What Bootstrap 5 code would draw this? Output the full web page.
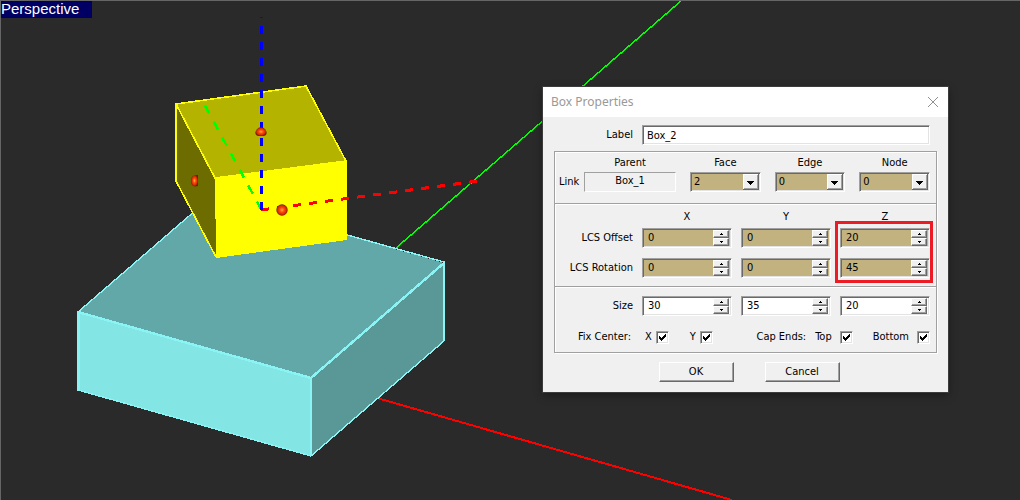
<!DOCTYPE html>
<html lang="en">
<head>
<meta charset="utf-8">
<meta name="viewport" content="width=device-width, initial-scale=1">
<title>Box Properties</title>
<link href="https://cdn.jsdelivr.net/npm/bootstrap@5.3.0/dist/css/bootstrap.min.css" rel="stylesheet">
<style>
:root { --face: #f0f0f0; --tan: #c2b280; --shade: #a0a0a0; --dark: #696969; --light: #e3e3e3; }
body { background: #2a2a2a; }
.viewport { border-top: 1px solid #666; border-left: 1px solid #666; height: 100vh; }
.scene { width: 100%; height: 100%; }
.view-name { top: 0; left: 0; width: 91px; height: 17px; background: #000064; color: #fff; font: 15px/16px "Liberation Sans", Arial, sans-serif; }

/* dialog window floating over the 3D canvas */
.prop-window { top: 86px; left: 542px; width: 405px; height: 305px; background: var(--face); color: #000; font: 11px/14px "DejaVu Sans Condensed", "DejaVu Sans", sans-serif; box-shadow: 0 0 0 1px #3c3c3c, 0 3px 9px rgba(0,0,0,.4); }
.title-strip { height: 30px; padding: 0 9px 0 8px; background: #fff; color: #999; font: 12px/16px "Noto Sans", sans-serif; }
.title-strip h1 { font: inherit; }
.close-x { width: 12px; height: 12px; }
.win-body { padding: 8px 11px 0; }
.label-row { grid-template-columns: 79px 1fr; column-gap: 9px; padding-right: 7px; }

.sunken { border: 1px solid; border-color: var(--shade) #fff #fff var(--shade); box-shadow: inset 1px 1px var(--dark), inset -1px -1px var(--light); border-radius: 0; height: 20px; background-color: #fff; color: #000; }
.sunken.tan { background-color: var(--tan); }
.field { padding: 0 4px; font: inherit; outline-offset: 0; }
.raised { border: 1px solid; border-color: #fff var(--dark) var(--dark) #fff; box-shadow: inset -1px -1px var(--shade); background: var(--face); color: #000; border-radius: 0; padding: 0; }

.frame { margin-top: 6px; border: 1px solid var(--shade); box-shadow: 1px 1px #fff, inset 1px 1px #fff; }
.part + .part { border-top: 1px solid var(--shade); box-shadow: inset 0 1px #fff; }
.part { padding: 0 6px 0 4px; }
.link-part { height: 51px; padding-top: 4px; column-gap: 14px; }
.parent-grid { grid-template-columns: 25px 92px; row-gap: 2px; }
.parent-box { height: 20px; border: 1px solid; border-color: var(--shade) #fff #fff var(--shade); line-height: 16px; }
.pick { row-gap: 2px; }
.picks { column-gap: 14px; }
.drop { appearance: none; padding: 0 20px 0 3px; font: inherit; background-repeat: no-repeat; background-position: right 1px top 1px;
  background-image: url("data:image/svg+xml,%3Csvg xmlns='http://www.w3.org/2000/svg' width='16' height='16' shape-rendering='crispEdges'%3E%3Cpath fill='%23696969' d='M0 0h16v16H0z'/%3E%3Cpath fill='%23fff' d='M0 0h15v15H0z'/%3E%3Cpath fill='%23a0a0a0' d='M1 1h14v14H1z'/%3E%3Cpath fill='%23f0f0f0' d='M1 1h13v13H1z'/%3E%3Cpath d='M4 7h7v1h-1v1h-1v1h-1v1h-1v-1h-1v-1h-1v-1h-1z'/%3E%3C/svg%3E"); }

.value-grid { grid-template-columns: 1fr 90px 90px 90px; column-gap: 9px; align-items: center; }
.lcs-part { height: 83px; padding-top: 6px; }
.lcs-part .value-grid { row-gap: 10px; }
.heads { margin-bottom: 4px; }
.spin { padding: 1px 2px 1px 1px; }
.spin input { width: 0; min-width: 0; border: 0; background: transparent; padding: 0 0 0 4px; font: inherit; color: #000; }
.spin-btns { width: 16px; flex: none; }
.spin-btns button { height: 8px; line-height: 0; display: flex; align-items: center; justify-content: center; }
.spin-btns svg { width: 3px; height: 2px; }
.callout { top: 134px; left: 292px; width: 98px; height: 62px; border: 3px solid #ed1c24; pointer-events: none; }
.size-part { height: 66px; padding-top: 9px; }
.checks { margin-top: 14px; height: 14px; }
.checks label { column-gap: 4px; }
.fix-group { width: 72px; }
.tick { appearance: none; margin: 0; width: 13px; height: 13px; border: 1px solid; border-color: var(--shade) #fff #fff var(--shade); box-shadow: inset 1px 1px var(--dark), inset -1px -1px var(--light); background: #fff; }
.tick:checked { background-image: url("data:image/svg+xml,%3Csvg xmlns='http://www.w3.org/2000/svg' width='11' height='11' shape-rendering='crispEdges'%3E%3Cpath d='M2 4h1v1h1v1h1v-1h1v-1h1v-1h1v-1h1v3h-1v1h-1v1h-1v1h-1v1h-1v-1h-1v-1h-1z'/%3E%3C/svg%3E"); }
.x-tick { margin-left: 14px; } .y-tick { margin-left: 21px; }
.cap-group { column-gap: 9px; }
.checks .cap-group label { column-gap: 8px; }
.bottom-tick { margin-left: 11px; }
.actions { margin-top: 9px; padding-left: 7px; column-gap: 31px; }
.push { width: 75px; height: 20px; font: inherit; }
</style>
</head>
<body>
<main class="viewport position-relative overflow-hidden">
  <svg class="scene d-block" viewBox="1 1 1019 499" preserveAspectRatio="xMinYMin slice" role="img" aria-label="Two linked boxes in perspective">
    <defs>
      <radialGradient id="ball"><stop offset="0" stop-color="#ffb028"/><stop offset=".4" stop-color="#ff4a10"/><stop offset=".75" stop-color="#d82c00"/><stop offset="1" stop-color="#702000"/></radialGradient>
    </defs>
    <g shape-rendering="crispEdges" fill="none">
      <path d="M396 248L681 1" stroke="#0f0" stroke-width="1.5"/>
      <path d="M377 398L732 500" stroke="#f00" stroke-width="2"/>
      <path d="M78 312L211 197L444 263L311 378Z" fill="#62a8a9"/>
      <path d="M78 312L311 378V456L78 390Z" fill="#84e6e4"/>
      <path d="M311 378L444 263V341L311 456Z" fill="#5a9898"/>
      <path d="M78 312L211 197L444 262V341L311 456L78 390Z" stroke="#8af4f4" stroke-width="1.4"/>
      <path d="M78 312L311 378L444 263M311 378V456M79 312V390" stroke="#8af4f4" stroke-width="2.4"/>
      <path d="M176 104L306 86L346 161L215 178Z" fill="#b3b300"/>
      <path d="M176 104L215 178L216 257L176 181Z" fill="#6c6c00"/>
      <path d="M215 178L347 161V240L216 258Z" fill="#ff0"/>
      <path d="M216 257L176 181V104L306 86L346 161L215 178L176 104" stroke="#ff0" stroke-width="1.6"/>
      <path d="M205 105.500L261 209" stroke="#0f0" stroke-width="2.600" stroke-dasharray="9.100 9.100"/>
      <path d="M261 210L478 181" stroke="#f00" stroke-width="3" stroke-dasharray="8.070 8.070"/>
      <path d="M261.500 210V17" stroke="#00f" stroke-width="3" stroke-dasharray="8"/>
    </g>
    <path d="M255.500 134a5.600 5.600 0 1 1 11 0q-1 2-3 2h-5q-2 0-3-2z" fill="url(#ball)"/>
    <path d="M198 175a6.500 6 0 0 0 0 11.500z" fill="#c83008"/>
    <path d="M198 175q-7-1-7 6t7 5z" fill="url(#ball)"/>
    <circle cx="282" cy="210" r="5.700" fill="url(#ball)"/>
  </svg>
  <div class="view-name position-absolute">Perspective</div>

  <section class="prop-window position-absolute" aria-labelledby="dlg-title">
    <header class="title-strip d-flex align-items-center justify-content-between">
      <h1 id="dlg-title" class="m-0">Box Properties</h1>
      <button type="button" class="border-0 bg-transparent p-0 d-flex" aria-label="Close"><svg class="close-x" viewBox="0 0 12 12"><path d="M1 1L11 11M11 1L1 11" stroke="#909090" fill="none"/></svg></button>
    </header>
    <form class="win-body">
      <div class="label-row d-grid align-items-center">
        <label for="lbl" class="text-end">Label</label>
        <input id="lbl" class="sunken field w-100" type="text" value="Box_2">
      </div>
      <div class="frame">
        <div class="part link-part d-flex">
          <div class="parent-grid d-grid align-content-start align-items-center">
            <span></span><span id="parent" class="text-center">Parent</span>
            <span>Link</span><output class="parent-box text-center" aria-labelledby="parent">Box_1</output>
          </div>
          <div class="picks d-flex flex-grow-1">
            <div class="pick d-grid flex-fill align-content-start"><label for="face" class="text-center">Face</label><select id="face" class="drop sunken tan w-100"><option>2</option></select></div>
            <div class="pick d-grid flex-fill align-content-start"><label for="edge" class="text-center">Edge</label><select id="edge" class="drop sunken tan w-100"><option>0</option></select></div>
            <div class="pick d-grid flex-fill align-content-start"><label for="node" class="text-center">Node</label><select id="node" class="drop sunken tan w-100"><option>0</option></select></div>
          </div>
        </div>
        <div class="part lcs-part">
          <div class="value-grid heads d-grid text-center"><span></span><span>X</span><span>Y</span><span>Z</span></div>
          <div class="value-grid d-grid">
            <label for="ox" class="text-end">LCS Offset</label>
            <div class="spin sunken tan d-flex"><input id="ox" class="flex-fill" type="text" inputmode="numeric" value="0"><span class="spin-btns d-flex flex-column"><button type="button" class="raised" aria-label="Increase"><svg viewBox="0 0 3 2"><path d="M0 2h3v-1h-1v-1h-1v1h-1z"/></svg></button><button type="button" class="raised" aria-label="Decrease"><svg viewBox="0 0 3 2"><path d="M0 0h3v1h-1v1h-1v-1h-1z"/></svg></button></span></div>
            <div class="spin sunken tan d-flex"><input aria-label="LCS Offset Y" class="flex-fill" type="text" inputmode="numeric" value="0"><span class="spin-btns d-flex flex-column"><button type="button" class="raised" aria-label="Increase"><svg viewBox="0 0 3 2"><path d="M0 2h3v-1h-1v-1h-1v1h-1z"/></svg></button><button type="button" class="raised" aria-label="Decrease"><svg viewBox="0 0 3 2"><path d="M0 0h3v1h-1v1h-1v-1h-1z"/></svg></button></span></div>
            <div class="spin sunken tan d-flex"><input aria-label="LCS Offset Z" class="flex-fill" type="text" inputmode="numeric" value="20"><span class="spin-btns d-flex flex-column"><button type="button" class="raised" aria-label="Increase"><svg viewBox="0 0 3 2"><path d="M0 2h3v-1h-1v-1h-1v1h-1z"/></svg></button><button type="button" class="raised" aria-label="Decrease"><svg viewBox="0 0 3 2"><path d="M0 0h3v1h-1v1h-1v-1h-1z"/></svg></button></span></div>
            <label for="rx" class="text-end">LCS Rotation</label>
            <div class="spin sunken tan d-flex"><input id="rx" class="flex-fill" type="text" inputmode="numeric" value="0"><span class="spin-btns d-flex flex-column"><button type="button" class="raised" aria-label="Increase"><svg viewBox="0 0 3 2"><path d="M0 2h3v-1h-1v-1h-1v1h-1z"/></svg></button><button type="button" class="raised" aria-label="Decrease"><svg viewBox="0 0 3 2"><path d="M0 0h3v1h-1v1h-1v-1h-1z"/></svg></button></span></div>
            <div class="spin sunken tan d-flex"><input aria-label="LCS Rotation Y" class="flex-fill" type="text" inputmode="numeric" value="0"><span class="spin-btns d-flex flex-column"><button type="button" class="raised" aria-label="Increase"><svg viewBox="0 0 3 2"><path d="M0 2h3v-1h-1v-1h-1v1h-1z"/></svg></button><button type="button" class="raised" aria-label="Decrease"><svg viewBox="0 0 3 2"><path d="M0 0h3v1h-1v1h-1v-1h-1z"/></svg></button></span></div>
            <div class="spin sunken tan d-flex"><input aria-label="LCS Rotation Z" class="flex-fill" type="text" inputmode="numeric" value="45"><span class="spin-btns d-flex flex-column"><button type="button" class="raised" aria-label="Increase"><svg viewBox="0 0 3 2"><path d="M0 2h3v-1h-1v-1h-1v1h-1z"/></svg></button><button type="button" class="raised" aria-label="Decrease"><svg viewBox="0 0 3 2"><path d="M0 0h3v1h-1v1h-1v-1h-1z"/></svg></button></span></div>
          </div>
        </div>
        <div class="part size-part">
          <div class="value-grid d-grid">
            <label for="sx" class="text-end">Size</label>
            <div class="spin sunken d-flex"><input id="sx" class="flex-fill" type="text" inputmode="numeric" value="30"><span class="spin-btns d-flex flex-column"><button type="button" class="raised" aria-label="Increase"><svg viewBox="0 0 3 2"><path d="M0 2h3v-1h-1v-1h-1v1h-1z"/></svg></button><button type="button" class="raised" aria-label="Decrease"><svg viewBox="0 0 3 2"><path d="M0 0h3v1h-1v1h-1v-1h-1z"/></svg></button></span></div>
            <div class="spin sunken d-flex"><input aria-label="Size Y" class="flex-fill" type="text" inputmode="numeric" value="35"><span class="spin-btns d-flex flex-column"><button type="button" class="raised" aria-label="Increase"><svg viewBox="0 0 3 2"><path d="M0 2h3v-1h-1v-1h-1v1h-1z"/></svg></button><button type="button" class="raised" aria-label="Decrease"><svg viewBox="0 0 3 2"><path d="M0 0h3v1h-1v1h-1v-1h-1z"/></svg></button></span></div>
            <div class="spin sunken d-flex"><input aria-label="Size Z" class="flex-fill" type="text" inputmode="numeric" value="20"><span class="spin-btns d-flex flex-column"><button type="button" class="raised" aria-label="Increase"><svg viewBox="0 0 3 2"><path d="M0 2h3v-1h-1v-1h-1v1h-1z"/></svg></button><button type="button" class="raised" aria-label="Decrease"><svg viewBox="0 0 3 2"><path d="M0 0h3v1h-1v1h-1v-1h-1z"/></svg></button></span></div>
          </div>
          <div class="checks d-flex align-items-center justify-content-between">
            <div class="d-flex align-items-center">
              <span class="fix-group text-end">Fix Center:</span>
              <label class="x-tick d-flex align-items-center">X <input class="tick" type="checkbox" checked></label>
              <label class="y-tick d-flex align-items-center">Y <input class="tick" type="checkbox" checked></label>
            </div>
            <div class="cap-group d-flex align-items-center">
              <span>Cap Ends:</span>
              <label class="d-flex align-items-center">Top <input class="tick" type="checkbox" checked></label>
              <label class="bottom-tick d-flex align-items-center">Bottom <input class="tick" type="checkbox" checked></label>
            </div>
          </div>
        </div>
      </div>
      <div class="actions d-flex justify-content-center">
        <button type="button" class="push raised">OK</button>
        <button type="button" class="push raised">Cancel</button>
      </div>
    </form>
    <div class="callout position-absolute"></div>
  </section>
</main>
<script src="https://cdn.jsdelivr.net/npm/bootstrap@5.3.0/dist/js/bootstrap.bundle.min.js"></script>
</body>
</html>
